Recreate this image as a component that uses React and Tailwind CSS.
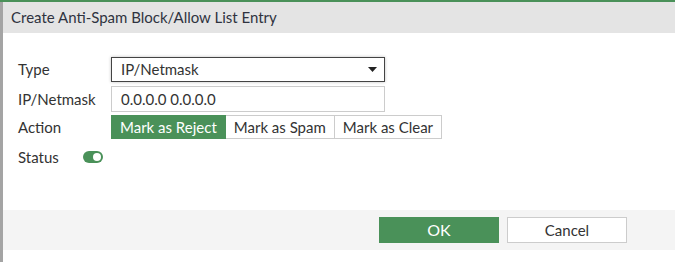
import React, { useState } from "react";

function Toggle({ on }) {
  return (
    <div
      className={`w-[20px] h-[12px] rounded-full flex items-center px-[2px] ${
        on ? "bg-[#4a9159] justify-end" : "bg-[#bbb] justify-start"
      }`}
    >
      <div className="w-[8px] h-[8px] rounded-full bg-white" />
    </div>
  );
}

export default function App() {
  const [action, setAction] = useState("reject");
  const actions = [
    { key: "reject", label: "Mark as Reject" },
    { key: "spam", label: "Mark as Spam" },
    { key: "clear", label: "Mark as Clear" },
  ];

  return (
    <div
      className="w-[675px] h-[262px] flex flex-col bg-white border-t-2 border-[#4a9159] text-[15px] text-[#333]"
      style={{ fontFamily: "Lato, 'Open Sans', sans-serif" }}
    >
      <div className="flex flex-1 border-l-[3px] border-[#a4a4a4]">
        <div className="flex-1 flex flex-col">
          <div className="h-[31px] bg-[#e4e4e4] flex items-center pl-[8px]">
            <span className="text-[15px] text-[#2f3340]">
              Create Anti-Spam Block/Allow List Entry
            </span>
          </div>

          <div className="flex-1 pl-[15px] pt-[24px]">
            <div className="grid grid-cols-[93px_auto] gap-y-[4px] items-center">
              <div>Type</div>
              <div className="w-[274px] h-[25px] border border-[#444] shadow-[0_0_3px_rgba(0,0,0,0.25)] flex items-center justify-between pl-[9px] pr-[7px]">
                <span>IP/Netmask</span>
                <svg width="9" height="5" viewBox="0 0 9 5">
                  <path d="M0 0 L9 0 L4.5 5 Z" fill="#222" />
                </svg>
              </div>

              <div>IP/Netmask</div>
              <div className="w-[274px] h-[26px] border border-[#ccc] flex items-center pl-[9px]">
                0.0.0.0 0.0.0.0
              </div>

              <div>Action</div>
              <div className="flex h-[24px] -mt-[1px]">
                {actions.map((a, i) => (
                  <button
                    key={a.key}
                    onClick={() => setAction(a.key)}
                    className={`h-full px-[8px] flex items-center ${
                      action === a.key
                        ? "bg-[#4a9159] text-white border border-[#4a9159]"
                        : "bg-white text-[#333] border border-[#ccc]"
                    } ${i > 0 ? "border-l-0" : ""}`}
                  >
                    {a.label}
                  </button>
                ))}
              </div>

              <div className="flex items-center h-[28px] col-span-2">
                <span className="w-[65px]">Status</span>
                <Toggle on />
              </div>
            </div>
          </div>

          <div className="h-[40px] bg-[#f4f4f4] flex items-center pl-[376px] gap-[8px]">
            <button className="w-[120px] h-[26px] bg-[#4a9159] text-white text-[16px]">
              OK
            </button>
            <button className="w-[120px] h-[26px] bg-white border border-[#ccc] text-[#333] text-[15px]">
              Cancel
            </button>
          </div>
          <div className="h-[12px] bg-white" />
        </div>
      </div>
    </div>
  );
}
